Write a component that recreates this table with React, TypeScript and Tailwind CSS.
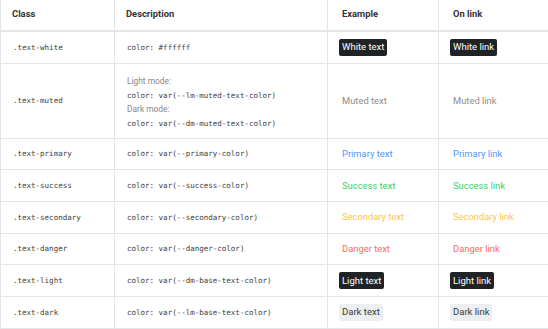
import React from "react";

const mono = { fontFamily: '"DejaVu Sans Mono", "Liberation Mono", monospace' };

type Row = {
  cls: string;
  desc: React.ReactNode;
  ex: React.ReactNode;
  link: React.ReactNode;
  tall?: boolean;
};

const Badge = ({ children, dark }: { children: React.ReactNode; dark?: boolean }) => (
  <span
    className={
      "-ml-[3px] inline-flex h-[17px] items-center rounded-[2px] px-[3px] text-[9.5px] " +
      (dark ? "bg-[#202326] text-white" : "bg-[#eceef0] text-[#3a3a3a]")
    }
  >
    {children}
  </span>
);

const Code = ({ children }: { children: React.ReactNode }) => (
  <span className="text-[7.5px] text-[#3c3c3c]" style={mono}>
    {children}
  </span>
);

const rows: Row[] = [
  {
    cls: ".text-white",
    desc: <Code>color: #ffffff</Code>,
    ex: <Badge dark>White text</Badge>,
    link: <Badge dark>White link</Badge>,
  },
  {
    cls: ".text-muted",
    tall: true,
    desc: (
      <div className="flex flex-col gap-0">
        <span className="h-[14px] leading-[14px] text-[8.4px] text-[#888]">Light mode:</span>
        <span className="h-[14px] leading-[14px]"><Code>color: var(--lm-muted-text-color)</Code></span>
        <span className="h-[14px] leading-[14px] text-[8.4px] text-[#888]">Dark mode:</span>
        <span className="h-[14px] leading-[14px]"><Code>color: var(--dm-muted-text-color)</Code></span>
      </div>
    ),
    ex: <span className="text-[#8c8c8c]">Muted text</span>,
    link: <span className="text-[#8c8c8c]">Muted link</span>,
  },
  {
    cls: ".text-primary",
    desc: <Code>color: var(--primary-color)</Code>,
    ex: <span className="text-[#4f95ff]">Primary text</span>,
    link: <span className="text-[#4f95ff]">Primary link</span>,
  },
  {
    cls: ".text-success",
    desc: <Code>color: var(--success-color)</Code>,
    ex: <span className="text-[#33d46a]">Success text</span>,
    link: <span className="text-[#33d46a]">Success link</span>,
  },
  {
    cls: ".text-secondary",
    desc: <Code>color: var(--secondary-color)</Code>,
    ex: <span className="text-[#ffc644]">Secondary text</span>,
    link: <span className="text-[#ffc644]">Secondary link</span>,
  },
  {
    cls: ".text-danger",
    desc: <Code>color: var(--danger-color)</Code>,
    ex: <span className="text-[#ff6666]">Danger text</span>,
    link: <span className="text-[#ff6666]">Danger link</span>,
  },
  {
    cls: ".text-light",
    desc: <Code>color: var(--dm-base-text-color)</Code>,
    ex: <Badge dark>Light text</Badge>,
    link: <Badge dark>Light link</Badge>,
  },
  {
    cls: ".text-dark",
    desc: <Code>color: var(--lm-base-text-color)</Code>,
    ex: <Badge>Dark text</Badge>,
    link: <Badge>Dark link</Badge>,
  },
];

export default function App() {
  return (
    <div
      className="h-[329px] w-[548px] overflow-hidden bg-white text-[9.4px] text-[#333]"
      style={{ fontFamily: 'Roboto, "Noto Sans", sans-serif' }}
    >
      <div className="grid w-[548px] grid-cols-[114px_213px_111px_110px] border-l border-[#e3e6e9]">
        {["Class", "Description", "Example", "On link"].map((h, i) => (
          <div
            key={h}
            className={
              "flex h-[32px] items-center border-b-2 border-r border-[#e3e6e9] pb-[1px] font-bold text-[#333] " +
              (i < 2 ? "pl-[11px]" : "pl-[14px]")
            }
          >
            {h}
          </div>
        ))}
        {rows.map((r) => (
          <React.Fragment key={r.cls}>
            <div
              className={
                "flex items-center border-b border-r border-[#e3e6e9] pl-[12px] " +
                (r.tall ? "h-[75px]" : "h-[31.7px]")
              }
            >
              <Code>{r.cls}</Code>
            </div>
            <div
              className={
                "flex items-center border-b border-r border-[#e3e6e9] pl-[12px] " +
                (r.tall ? "h-[75px] pt-[2px]" : "h-[31.7px]")
              }
            >
              {r.desc}
            </div>
            <div
              className={
                "flex items-center border-b border-r border-[#e3e6e9] pl-[14px] " +
                (r.tall ? "h-[75px]" : "h-[31.7px]")
              }
            >
              {r.ex}
            </div>
            <div
              className={
                "flex items-center border-b border-r border-[#e3e6e9] pl-[14px] " +
                (r.tall ? "h-[75px]" : "h-[31.7px]")
              }
            >
              {r.link}
            </div>
          </React.Fragment>
        ))}
      </div>
    </div>
  );
}
